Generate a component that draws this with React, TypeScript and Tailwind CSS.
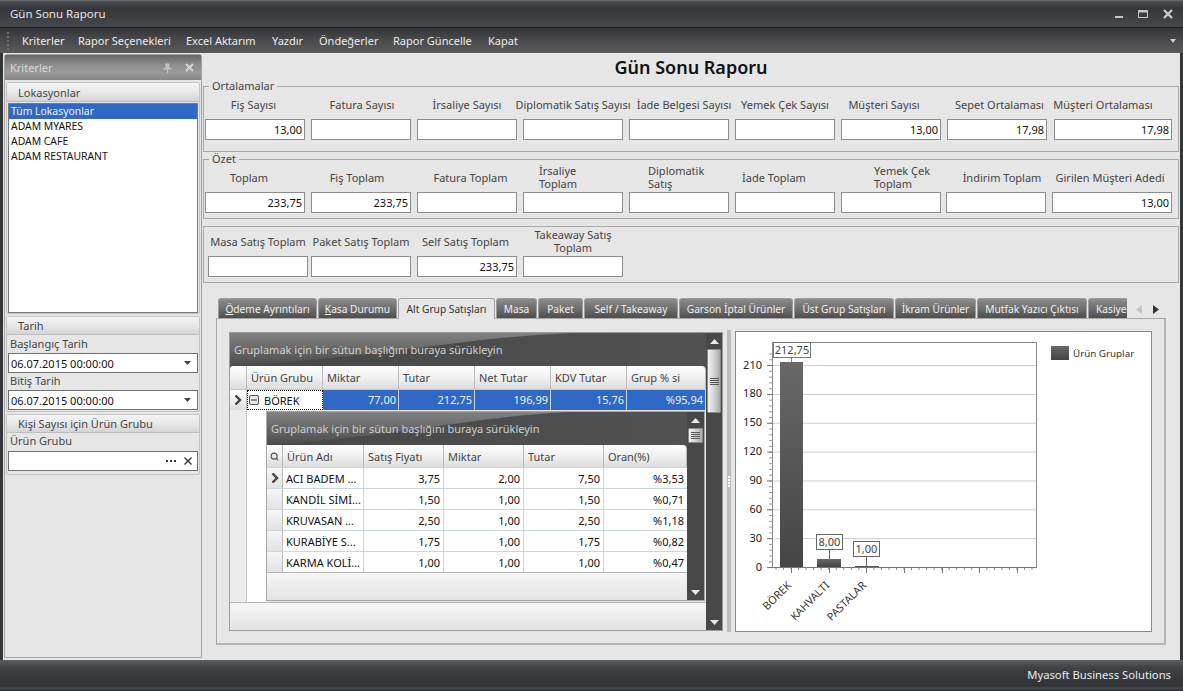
import React from "react";
import { Search } from "lucide-react";

const headGrad = "bg-[linear-gradient(#fdfdfd,#f0f0f0_50%,#dcdcdc)]";

function Field({ label, value, cls, lcls = "justify-center text-center" }: { label: string; value?: string; cls: string; lcls?: string }) {
  return (
    <div className={`flex flex-col shrink-0 ${cls}`}>
      <div className={`h-[28px] pb-[2px] overflow-visible flex items-center whitespace-pre leading-[13px] text-[#444] ${lcls}`}>
        <span>{label}</span>
      </div>
      <div className="h-[21px] bg-white border border-[#8c8c8c] flex items-center justify-end pr-[2px] text-[#111]">{value}</div>
    </div>
  );
}

function Group({ legend, cls, children }: { legend?: string; cls: string; children: React.ReactNode }) {
  return (
    <div className={`relative border border-[#a8a8a8] flex ${cls}`}>
      {legend && <span className="absolute left-[5px] -top-[8px] h-[14px] leading-[14px] px-[3px] bg-[#e6e6e6] text-[#444]">{legend}</span>}
      {children}
    </div>
  );
}

function DockHead({ children, cls }: { children: React.ReactNode; cls: string }) {
  return (
    <div className={`${cls} shrink-0 pl-[11px] flex items-center text-[#444] border-b border-[#bdbdbd] bg-[linear-gradient(#f4f4f4,#e8e8e8_50%,#d4d4d4)]`}>
      {children}
    </div>
  );
}

function DockInput({ text, arrow }: { text?: string; arrow?: boolean }) {
  return (
    <div className="h-[20px] mx-px bg-white border border-[#6f6f6f] flex items-center pl-[2px] pr-[6px] justify-between text-[#111]">
      <span>{text}</span>
      {arrow && (
        <svg width="7" height="4" viewBox="0 0 7 4"><polygon points="0,0 7,0 3.5,4" fill="#444" /></svg>
      )}
    </div>
  );
}

function Tri({ up, fill = "#e8e8e8" }: { up?: boolean; fill?: string }) {
  return (
    <svg width="9" height="5" viewBox="0 0 9 5">
      <polygon points={up ? "0,5 9,5 4.5,0" : "0,0 9,0 4.5,5"} fill={fill} />
    </svg>
  );
}

function Scroll({ cls, thumb, lines }: { cls: string; thumb: string; lines: number }) {
  return (
    <div className={`${cls} shrink-0 bg-[#484848] flex flex-col items-stretch`}>
      <div className="h-[16px] shrink-0 flex items-center justify-center"><Tri up /></div>
      <div className={`${thumb} shrink-0 mx-px rounded-[1px] border border-[#8a8a8a] bg-[linear-gradient(90deg,#f2f2f2,#d4d4d4_50%,#a8a8a8)] flex flex-col items-center justify-center gap-px`}>
        {Array.from({ length: lines }).map((_, i) => (
          <div key={i} className="w-[9px] h-px bg-[#555]" />
        ))}
      </div>
      <div className="flex-1" />
      <div className="h-[16px] shrink-0 flex items-center justify-center"><Tri /></div>
    </div>
  );
}

function GroupPanel() {
  return (
    <div className="relative h-[33px] shrink-0 bg-[linear-gradient(90deg,#474747,#525252)] overflow-hidden flex items-center pl-[4px] text-[#cfcfcf]">
      <svg className="absolute inset-0 w-full h-full" viewBox="0 0 100 33" preserveAspectRatio="none">
        <defs>
          <linearGradient id="gp" x1="0" y1="0" x2="0" y2="1">
            <stop offset="0" stopColor="#828282" />
            <stop offset="1" stopColor="#4c4c4c" />
          </linearGradient>
        </defs>
        <path d="M0 0 H72 C50 4 32 24 0 33 Z" fill="url(#gp)" />
      </svg>
      <span className="relative">Gruplamak için bir sütun başlığını buraya sürükleyin</span>
    </div>
  );
}

function Arrow() {
  return (
    <svg width="8" height="10" viewBox="0 0 8 10">
      <path d="M1.5 0.5 L6 5 L1.5 9.5" fill="none" stroke="#444" strokeWidth="2.4" />
    </svg>
  );
}

const mainCols = [
  { t: "Miktar", w: "w-[76px]" },
  { t: "Tutar", w: "w-[76px]" },
  { t: "Net Tutar", w: "w-[76px]" },
  { t: "KDV Tutar", w: "w-[76px]" },
  { t: "Grup % si", w: "w-[79px]" },
];
const mainVals = [
  { t: "77,00", w: "w-[76px]" },
  { t: "212,75", w: "w-[76px]" },
  { t: "196,99", w: "w-[76px]" },
  { t: "15,76", w: "w-[76px]" },
  { t: "%95,94", w: "w-[79px]" },
];
const detailRows = [
  ["ACI BADEM ...", "3,75", "2,00", "7,50", "%3,53"],
  ["KANDİL SİMİ...", "1,50", "1,00", "1,50", "%0,71"],
  ["KRUVASAN ...", "2,50", "1,00", "2,50", "%1,18"],
  ["KURABİYE S...", "1,75", "1,00", "1,75", "%0,82"],
  ["KARMA KOLİ...", "1,00", "1,00", "1,00", "%0,47"],
];
const detailCols = [
  { t: "Satış Fiyatı", w: "w-[80px]" },
  { t: "Miktar", w: "w-[80px]" },
  { t: "Tutar", w: "w-[80px]" },
  { t: "Oran(%)", w: "w-[83px]" },
];

const tabs = [
  { t: "deme Ayrıntıları", u: "Ö", w: "w-[99px]" },
  { t: "asa Durumu", u: "K", w: "w-[79px]" },
  { t: "Alt Grup Satışları", w: "w-[97px]", active: true },
  { t: "Masa", w: "w-[41px]" },
  { t: "Paket", w: "w-[45px]" },
  { t: "Self / Takeaway", w: "w-[94px]" },
  { t: "Garson İptal Ürünler", w: "w-[114px]" },
  { t: "Üst Grup Satışları", w: "w-[100px]" },
  { t: "İkram Ürünler", w: "w-[81px]" },
  { t: "Mutfak Yazıcı Çıktısı", w: "w-[110px]" },
  { t: "Kasiyer", w: "w-[39px]", cut: true },
];

function Chart() {
  const majors = [0, 30, 60, 90, 120, 150, 180, 210];
  const y = (v: number) => 567 - v * 0.9615;
  const minors = Array.from({ length: 38 }, (_, i) => i * 6);
  const xMajor = [791, 829, 866, 904, 942, 979, 1017];
  const xMinor = Array.from({ length: 35 }, (_, i) => 776 + i * 7.53);
  return (
    <svg width="415" height="299" viewBox="736 332 415 299" className="block">
      <defs>
        <linearGradient id="bar" x1="0" y1="0" x2="0" y2="1">
          <stop offset="0" stopColor="#686868" />
          <stop offset="1" stopColor="#454545" />
        </linearGradient>
      </defs>
      {majors.slice(1).map((m) => (
        <line key={m} x1="772" x2="1036" y1={y(m) + 0.5} y2={y(m) + 0.5} stroke="#cfcfcf" />
      ))}
      <rect x="772.5" y="342.5" width="264" height="225" fill="none" stroke="#8a8a8a" />
      {minors.map((m) => (
        <line key={m} x1="769" x2="772" y1={y(m) + 0.5} y2={y(m) + 0.5} stroke="#999" />
      ))}
      {majors.map((m) => (
        <g key={m}>
          <line x1="767" x2="772" y1={y(m) + 0.5} y2={y(m) + 0.5} stroke="#777" />
          <text x="762" y={y(m) + 3.5} textAnchor="end" fill="#222" fontSize="11">{m}</text>
        </g>
      ))}
      <line x1="768" x2="1037" y1="567.5" y2="567.5" stroke="#777" />
      {xMinor.map((x) => (
        <line key={x} x1={x} x2={x} y1="568" y2="570" stroke="#888" />
      ))}
      {xMajor.map((x) => (
        <line key={x} x1={x + 0.5} x2={x + 0.5} y1="568" y2="573" stroke="#777" />
      ))}
      <rect x="780" y="362" width="23" height="205" fill="url(#bar)" />
      <rect x="817" y="559" width="24" height="8" fill="url(#bar)" />
      <rect x="855" y="566" width="24" height="1" fill="#555" />
      <line x1="791.5" x2="791.5" y1="358" y2="362" stroke="#888" />
      <line x1="829.5" x2="829.5" y1="550" y2="559" stroke="#666" />
      <line x1="866.5" x2="866.5" y1="557" y2="566" stroke="#666" />
      <rect x="773.5" y="342.5" width="37" height="15" fill="#fff" stroke="#777" />
      <text x="792" y="354" textAnchor="middle" fill="#444" fontSize="11">212,75</text>
      <rect x="816.5" y="534.5" width="26" height="15" fill="#fff" stroke="#666" />
      <text x="829.5" y="546" textAnchor="middle" fill="#444" fontSize="11">8,00</text>
      <rect x="853.5" y="541.5" width="26" height="15" fill="#fff" stroke="#666" />
      <text x="866.5" y="553" textAnchor="middle" fill="#444" fontSize="11">1,00</text>
      <text x="792" y="586" textAnchor="end" fill="#333" fontSize="10.8" transform="rotate(-45 792 586)">BÖREK</text>
      <text x="830" y="586" textAnchor="end" fill="#333" fontSize="10.8" transform="rotate(-45 830 586)">KAHVALTI</text>
      <text x="867" y="586" textAnchor="end" fill="#333" fontSize="10.8" transform="rotate(-45 867 586)">PASTALAR</text>
      <rect x="1051" y="346" width="18" height="14" fill="url(#bar)" />
      <text x="1073" y="357" fill="#333" fontSize="9.8">Ürün Gruplar</text>
    </svg>
  );
}

export default function App() {
  return (
    <div className="w-[1183px] h-[691px] overflow-hidden flex flex-col bg-[#e6e6e6] text-[11px] leading-[13px] font-['Noto_Sans',sans-serif]">
      {/* title bar */}
      <div className="h-[28px] shrink-0 flex items-center justify-between pl-[10px] pr-[10px] text-[11.5px] text-[#e4e4e4] border-b border-[#1e1e20] bg-[linear-gradient(#6a6c70_0,#47484c_2px,#36373b_9px,#46484c_27px)]">
        <span>Gün Sonu Raporu</span>
        <div className="flex items-center gap-[15px]">
          <svg width="8" height="10" viewBox="0 0 8 10"><rect x="0" y="7" width="8" height="2" fill="#c8c8c8" /></svg>
          <svg width="10" height="10" viewBox="0 0 10 10"><rect x="0.5" y="1.5" width="9" height="7" fill="none" stroke="#c8c8c8" /><rect x="0" y="1" width="10" height="2.5" fill="#c8c8c8" /></svg>
          <svg width="10" height="10" viewBox="0 0 10 10"><path d="M1 1 L9 9 M9 1 L1 9" stroke="#d0d0d0" strokeWidth="2.2" /></svg>
        </div>
      </div>
      {/* menu bar */}
      <div className="h-[25px] shrink-0 flex items-center pl-[7px] pr-[7px] text-[#ececec] text-[11px] bg-[linear-gradient(#343538,#4a4a4c_50%,#5a5a5a)]">
        <div className="w-[15px] shrink-0 flex flex-col gap-[2px]">
          {[0, 1, 2, 3, 4].map((i) => (
            <div key={i} className="w-[2px] h-[2px] bg-[#6e6e6e]" />
          ))}
        </div>
        <span className="w-[56px] shrink-0">Kriterler</span>
        <span className="w-[108px] shrink-0">Rapor Seçenekleri</span>
        <span className="w-[86px] shrink-0">Excel Aktarım</span>
        <span className="w-[47px] shrink-0">Yazdır</span>
        <span className="w-[74px] shrink-0">Öndeğerler</span>
        <span className="w-[95px] shrink-0">Rapor Güncelle</span>
        <span className="flex-1">Kapat</span>
        <svg width="6" height="4" viewBox="0 0 6 4"><polygon points="0,0 6,0 3,4" fill="#cfcfcf" /></svg>
      </div>
      {/* body */}
      <div className="h-[607px] shrink-0 flex border-x-[3px] border-[#35363a] bg-[#e6e6e6]">
        {/* dock */}
        <div className="ml-px mt-px w-[198px] h-[604px] shrink-0 border border-[#a2a2a2] rounded-t-[3px] flex flex-col">
          <div className="h-[25px] shrink-0 flex items-center justify-between pl-[5px] pr-[7px] text-[#d8d8d8] bg-[linear-gradient(#666,#8e8e8e_40%,#9a9a9a_70%,#868686)]">
            <span>Kriterler</span>
            <div className="flex items-center gap-[13px]">
              <svg width="9" height="10" viewBox="0 0 9 10"><path d="M2.5 0.5 H6.5 V5 H8.5 V6.5 H5 V10 H4 V6.5 H0.5 V5 H2.5 Z" fill="#c4c4c4" /></svg>
              <svg width="9" height="9" viewBox="0 0 9 9"><path d="M1 1 L8 8 M8 1 L1 8" stroke="#d4d4d4" strokeWidth="2" /></svg>
            </div>
          </div>
          <div className="mt-[2px] mx-px h-[232px] shrink-0 border border-[#c4c4c4] rounded-[2px] flex flex-col">
            <DockHead cls="h-[19px]">Lokasyonlar</DockHead>
            <div className="mt-px mx-px h-[210px] bg-white border border-[#777] text-[#111] text-[10.4px]">
              <div className="h-[15px] flex items-center pl-[2px] bg-[#2f69c4] text-[#f0f0f0]">Tüm Lokasyonlar</div>
              <div className="h-[15px] flex items-center pl-[2px]">ADAM MYARES</div>
              <div className="h-[15px] flex items-center pl-[2px]">ADAM CAFE</div>
              <div className="h-[15px] flex items-center pl-[2px]">ADAM RESTAURANT</div>
            </div>
          </div>
          <div className="mt-[2px] mx-px h-[96px] shrink-0 border border-[#c4c4c4] rounded-[2px] flex flex-col">
            <DockHead cls="h-[18px]">Tarih</DockHead>
            <div className="h-[18px] pb-[2px] flex items-center pl-[3px] text-[#444]">Başlangıç Tarih</div>
            <DockInput text="06.07.2015 00:00:00" arrow />
            <div className="h-[17px] pb-[2px] flex items-center pl-[3px] text-[#444]">Bitiş Tarih</div>
            <DockInput text="06.07.2015 00:00:00" arrow />
          </div>
          <div className="mt-[2px] mx-px h-[61px] shrink-0 border border-[#c4c4c4] rounded-[2px] flex flex-col">
            <DockHead cls="h-[18px]">Kişi Sayısı için Ürün Grubu</DockHead>
            <div className="h-[18px] pb-[3px] flex items-center pl-[3px] text-[#444]">Ürün Grubu</div>
            <div className="h-[20px] mx-px bg-white border border-[#6f6f6f] flex items-center justify-end pr-[5px] gap-[8px]">
              <svg width="10" height="2" viewBox="0 0 10 2"><path d="M0 0h2v2H0zM4 0h2v2H4zM8 0h2v2H8z" fill="#333" /></svg>
              <svg width="8" height="8" viewBox="0 0 8 8"><path d="M0.5 0.5 L7.5 7.5 M7.5 0.5 L0.5 7.5" stroke="#333" strokeWidth="1.4" /></svg>
            </div>
          </div>
        </div>
        {/* main */}
        <div className="ml-px w-[976px] shrink-0 flex flex-col">
          <div className="h-[28px] shrink-0 mb-[5px] flex items-center justify-center text-[18px] font-semibold text-[#111]">Gün Sonu Raporu</div>
          <Group legend="Ortalamalar" cls="h-[66px] shrink-0 pl-px pt-[4px]">
            <Field cls="w-[100px]" lcls="justify-center pr-[3px]" label="Fiş Sayısı" value="13,00" />
            <Field cls="w-[100px] ml-[6px]" lcls="justify-center pl-[2px]" label="Fatura Sayısı" />
            <Field cls="w-[100px] ml-[6px]" label="İrsaliye Sayısı" />
            <Field cls="w-[100px] ml-[6px]" label="Diplomatik Satış Sayısı" />
            <Field cls="w-[100px] ml-[6px]" lcls="justify-center pl-[10px]" label="İade Belgesi Sayısı" />
            <Field cls="w-[100px] ml-[6px]" label="Yemek Çek Sayısı" />
            <Field cls="w-[100px] ml-[6px]" lcls="justify-center pr-[14px]" label="Müşteri Sayısı" value="13,00" />
            <Field cls="w-[100px] ml-[6px]" lcls="justify-center pl-[5px]" label="Sepet Ortalaması" value="17,98" />
            <Field cls="w-[118px] ml-[7px]" lcls="justify-center pr-[20px]" label="Müşteri Ortalaması" value="17,98" />
          </Group>
          <Group legend="Özet" cls="h-[60px] mt-[7px] shrink-0 pl-px pt-[4px]">
            <Field cls="w-[100px]" lcls="justify-center pr-[12px]" label="Toplam" value="233,75" />
            <Field cls="w-[100px] ml-[6px]" lcls="justify-center pr-[8px]" label="Fiş Toplam" value="233,75" />
            <Field cls="w-[100px] ml-[6px]" lcls="justify-center pl-[7px]" label="Fatura Toplam" />
            <Field cls="w-[100px] ml-[6px]" lcls="justify-start pl-[16px] overflow-hidden" label={"İrsaliye\nToplam"} />
            <Field cls="w-[100px] ml-[6px]" lcls="justify-start pl-[19px] overflow-hidden" label={"Diplomatik\nSatış"} />
            <Field cls="w-[100px] ml-[6px]" lcls="justify-center pr-[22px]" label="İade Toplam" />
            <Field cls="w-[100px] ml-[6px]" lcls="justify-start pl-[33px] overflow-hidden" label={"Yemek Çek\nToplam"} />
            <Field cls="w-[100px] ml-[5px]" lcls="justify-center pl-[12px]" label="İndirim Toplam" />
            <Field cls="w-[120px] ml-[6px]" lcls="justify-center pr-[4px]" label="Girilen Müşteri Adedi" value="13,00" />
          </Group>
          <Group cls="h-[57px] mt-[7px] shrink-0 pl-[4px] pt-px">
            <Field cls="w-[100px]" label="Masa Satış Toplam" />
            <Field cls="w-[100px] ml-[3px]" label="Paket Satış Toplam" />
            <Field cls="w-[100px] ml-[6px]" lcls="justify-center pr-[3px]" label="Self Satış Toplam" value="233,75" />
            <Field cls="w-[100px] ml-[6px]" label={"Takeaway Satış\nToplam"} />
          </Group>
          {/* tabs */}
          <div className="mt-[15px] ml-[13px] w-[950px] flex flex-col">
            <div className="h-[21px] shrink-0 relative z-10 flex items-end gap-px pl-[2px] -mb-px text-[10.2px]">
              {tabs.map((t) =>
                t.active ? (
                  <div key={t.t} className={`${t.w} h-[21px] pt-px shrink-0 rounded-t-[3px] border border-b-0 border-[#a4a4a4] bg-[#e6e6e6] flex items-center justify-center text-[#333]`}>{t.t}</div>
                ) : (
                  <div key={t.t} className={`${t.w} h-[20px] pt-px mb-px shrink-0 overflow-hidden rounded-t-[3px] border-t border-x border-[#9c9c9c] bg-[linear-gradient(#8c8c8c,#6e6e6e_50%,#4e4e4e)] flex items-center text-[#f0f0f0] whitespace-nowrap ${t.cut ? "pl-[7px] rounded-tr-none border-r-0" : "justify-center"}`}>
                    <span>
                      {t.u && <u>{t.u}</u>}
                      {t.t}
                    </span>
                  </div>
                )
              )}
              <div className="ml-[8px] h-[20px] flex items-center gap-[11px]">
                <svg width="6" height="9" viewBox="0 0 6 9"><polygon points="6,0 6,9 0,4.5" fill="#c4c4c4" /></svg>
                <svg width="6" height="9" viewBox="0 0 6 9"><polygon points="0,0 0,9 6,4.5" fill="#333" /></svg>
              </div>
            </div>
            <div className="h-[327px] border border-[#a8a8a8] border-r-[2px] border-b-[2px] border-r-[#b4b4b4] border-b-[#b4b4b4] pl-[12px] pt-[13px] flex">
              {/* grid */}
              <div className="w-[494px] h-[299px] shrink-0 border border-[#9a9a9a] flex">
                <div className="w-[476px] shrink-0 flex flex-col">
                  <GroupPanel />
                  <div className="h-[23px] shrink-0 flex text-[#444] bg-[#4c4c4c]">
                    <div className={`w-[17px] shrink-0 border-r border-[#bbb] rounded-tl-[3px] ${headGrad}`} />
                    <div className={`w-[76px] shrink-0 flex items-center pl-[4px] border-r border-[#bbb] ${headGrad}`}>Ürün Grubu</div>
                    {mainCols.map((c, i) => (
                      <div key={c.t} className={`${c.w} shrink-0 flex items-center pl-[4px] border-r border-[#bbb] ${i === 4 ? "rounded-tr-[4px]" : ""} ${headGrad}`}>{c.t}</div>
                    ))}
                  </div>
                  <div className="h-[21px] shrink-0 flex border-t border-[#c8c8c8]">
                    <div className={`w-[17px] shrink-0 flex items-center justify-center border-r border-[#bbb] ${headGrad}`}><Arrow /></div>
                    <div className="w-[76px] shrink-0 flex items-center pl-[2px] gap-[5px] bg-white outline-1 outline-dotted -outline-offset-1 outline-black text-[#111]">
                      <svg width="10" height="10" viewBox="0 0 10 10"><rect x="0.5" y="0.5" width="9" height="9" rx="1.5" fill="#e8e8e8" stroke="#555" /><rect x="2" y="4.5" width="6" height="1" fill="#333" /></svg>
                      BÖREK
                    </div>
                    {mainVals.map((v) => (
                      <div key={v.t} className={`${v.w} shrink-0 flex items-center justify-end pr-[2px] pb-px bg-[#2f69c4] text-[#f0f0f0] border-r border-[#c8d4ea]`}>{v.t}</div>
                    ))}
                  </div>
                  {/* detail region */}
                  <div className="h-[192px] shrink-0 flex">
                    <div className="w-[17px] shrink-0 bg-[#ececec] border-r border-[#c4c4c4]" />
                    <div className="w-[19px] shrink-0 bg-white" />
                    <div className="mt-px w-[439px] h-[190px] shrink-0 border border-[#a6a6a6] flex">
                      <div className="w-[420px] shrink-0 flex flex-col">
                        <GroupPanel />
                        <div className="h-[22px] shrink-0 flex text-[#444] bg-[#4c4c4c]">
                          <div className={`w-[16px] shrink-0 flex items-center justify-center border-r border-[#bbb] ${headGrad}`}><Search size={9} strokeWidth={3} color="#555" /></div>
                          <div className={`w-[81px] shrink-0 flex items-center pl-[4px] border-r border-[#bbb] ${headGrad}`}>Ürün Adı</div>
                          {detailCols.map((c, i) => (
                            <div key={c.t} className={`${c.w} shrink-0 flex items-center pl-[4px] border-r border-[#bbb] ${i === 3 ? "rounded-tr-[4px]" : ""} ${headGrad}`}>{c.t}</div>
                          ))}
                        </div>
                        {detailRows.map((r, idx) => (
                          <div key={r[0]} className="h-[21px] shrink-0 flex bg-white text-[#111] border-t border-[#ccd5e5]">
                            <div className={`w-[16px] shrink-0 flex items-center justify-center border-r border-[#bbb] bg-[linear-gradient(#f6f6f6,#e2e2e2)]`}>{idx === 0 && <Arrow />}</div>
                            <div className="w-[81px] shrink-0 flex items-center pl-[3px] border-r border-[#ccd5e5] overflow-hidden whitespace-nowrap">{r[0]}</div>
                            <div className="w-[80px] shrink-0 flex items-center justify-end pr-[3px] border-r border-[#ccd5e5]">{r[1]}</div>
                            <div className="w-[80px] shrink-0 flex items-center justify-end pr-[3px] border-r border-[#ccd5e5]">{r[2]}</div>
                            <div className="w-[80px] shrink-0 flex items-center justify-end pr-[3px] border-r border-[#ccd5e5]">{r[3]}</div>
                            <div className="w-[83px] shrink-0 flex items-center justify-end pr-[3px]">{r[4]}</div>
                          </div>
                        ))}
                        <div className="flex-1 border-t border-[#b4b4b4] bg-[linear-gradient(#f6f6f6,#e4e4e4)]" />
                      </div>
                      <Scroll cls="w-[17px]" thumb="h-[15px]" lines={4} />
                    </div>
                  </div>
                  <div className="flex-1 border-t border-[#b4b4b4] bg-[linear-gradient(#f6f6f6,#e2e2e2)]" />
                </div>
                <Scroll cls="w-[16px]" thumb="h-[64px]" lines={4} />
              </div>
              {/* splitter */}
              <div className="w-[12px] shrink-0 flex justify-center pt-0">
                <div className="w-[4px] h-[302px] -mt-[2px] bg-[#bcbcbc] flex flex-col items-center justify-center gap-px">
                  {[0, 1, 2, 3].map((i) => (
                    <div key={i} className="w-[2px] h-[2px] bg-white" />
                  ))}
                </div>
              </div>
              {/* chart */}
              <div className="w-[417px] h-[301px] -mt-px shrink-0 bg-white border border-[#8a8a8a]">
                <Chart />
              </div>
            </div>
          </div>
        </div>
      </div>
      {/* status bar */}
      <div className="h-[31px] shrink-0 flex items-center justify-end pr-[12px] pb-[2px] text-[11.25px] text-[#ececec] bg-[linear-gradient(#5c5e62,#3e4044_8px,#303236_26px,#4a4b4e_28px,#2a2b2e)]">
        Myasoft Business Solutions
      </div>
    </div>
  );
}
